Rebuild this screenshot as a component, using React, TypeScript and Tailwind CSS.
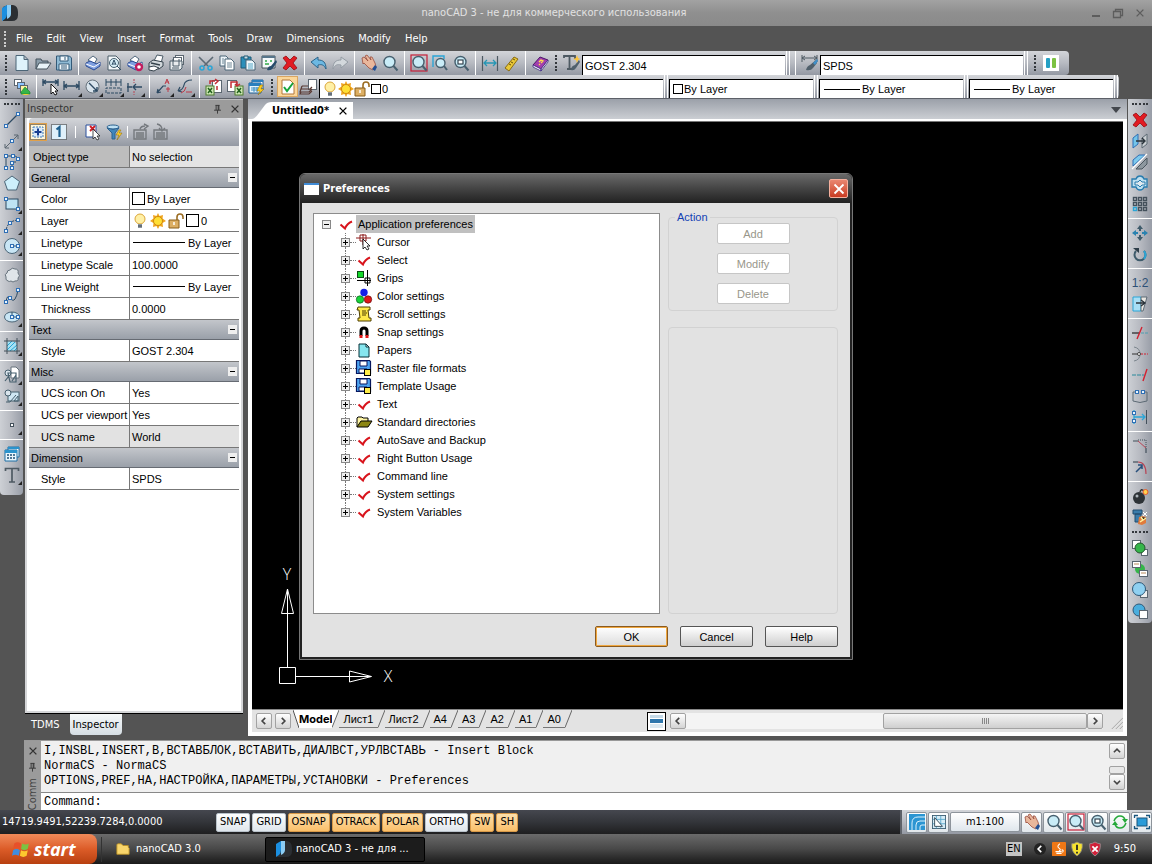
import { Fragment, type ReactNode } from "react";
import clsx from "clsx";

const INK = "#2d4a63";
const BLUE = "#2f6fb5";
const CYAN = "#2aa5d6";

const lens = (
    <>
        <circle cx="7.5" cy="7" r="5.5" fill="#c9ecf7" stroke="#47606f" strokeWidth="1.4" />
        <path d="M11.5 11l4 4.500" stroke="#47606f" strokeWidth="2" />
    </>
);

const hand = (
    <>
        <path d="M1 3l2-1 4 4-3-5 2-1 4 5-1-3 2 0 3 6 1 4-3 3-4-2-5-5-1 1z" fill="#e9b79c" stroke="#9a4d3c" strokeWidth=".8" />
        <path d="M11 14l3-4 2 2-2 4z" fill="#224f93" />
    </>
);

const printer = (
    <>
        <path d="M3 5l5-4 4 3-3 5z" fill="#fff" stroke={INK} strokeWidth=".8" />
        <path d="M1 8l4-2 7 3 3-2v4l-6 4-8-4z" fill="#7f9fe0" stroke="#294a94" strokeWidth="1" />
        <path d="M1 9l8 3 6-4" fill="none" stroke="#fff" strokeWidth="1" />
    </>
);

const node = (x: number, y: number) => (
    <rect x={x - 1.5} y={y - 1.5} width="3" height="3" fill="#eaf6ff" stroke={BLUE} strokeWidth="1" />
);

const sheet = (x: number, y: number, w: number, h: number, fill = "#fff") => (
    <rect x={x + 0.5} y={y + 0.5} width={w} height={h} fill={fill} stroke="#5b6670" strokeWidth="1" />
);

const ICONS: Record<string, ReactNode> = {
    file: <path d="M2 .5h8l4 4v11H2zM10 .5v4h4" fill="#dff3fb" stroke="#4b6577" />,
    open: (
        <>
            <path d="M1 14V4h5l1 2h6v3" fill="#8b9daa" stroke="#43505b" />
            <path d="M1 14l3-6h12l-4 6z" fill="#e8f3f8" stroke="#43505b" />
        </>
    ),
    save: (
        <>
            <path d="M.5 1h13l2 2v12H.5z" fill="#8fbad4" stroke="#345a78" />
            <path d="M4 1h8v5H4zM3 9h10v6H3z" fill="#f4fafd" stroke="#345a78" />
            <path d="M5 11h6M5 13h6M9 2v3" stroke="#345a78" />
        </>
    ),
    print: printer,
    preview: (
        <>
            <path d="M2 1h8l4 4v10H2z" fill="#f4f8fa" stroke="#4b5c68" />
            <circle cx="8" cy="8" r="4.5" fill="#d6edf6" stroke="#47606f" />
            <path d="M6 10l2-5 2 5M7 9h2M11 11l4 4" stroke={INK} fill="none" />
        </>
    ),
    printSetup: (
        <>
            {printer}
            <circle cx="12" cy="12" r="3" fill="#fff" stroke="#c21d5e" strokeWidth="2.4" />
        </>
    ),
    plot: (
        <>
            <path d="M6 6l3-6 6 1-2 7z" fill="#fff" stroke="#4b5c68" />
            <path d="M1 8l4-3 10 2v4l-4 3-10-2z" fill="#d2d8dc" stroke="#35424c" />
            <path d="M1 12l5-1 5 2-5 3-5-1z" fill="#fff" stroke="#35424c" />
            <path d="M3 8l9 2" stroke="#35424c" strokeWidth="1.4" />
        </>
    ),
    batch: (
        <>
            {sheet(6, 0, 8, 9)}
            {sheet(4, 2, 8, 9)}
            <path d="M1 6h12v7l-2 2H1z" fill="#e8ecee" stroke="#4b5c68" />
            <path d="M4 4v7h6V4M3 13h7" stroke="#4b5c68" fill="none" />
        </>
    ),
    cut: (
        <>
            <path d="M1 2l9 9M15 2l-9 9" stroke="#5d6a75" strokeWidth="1.6" />
            <circle cx="4" cy="13" r="2" fill="none" stroke={CYAN} strokeWidth="1.5" />
            <circle cx="12" cy="13" r="2" fill="none" stroke={CYAN} strokeWidth="1.5" />
        </>
    ),
    copy: (
        <>
            <path d="M1 1h6l2 2v8H1z" fill="#eef5f9" stroke="#4b6577" />
            <path d="M6 4h6l3 3v8H6z" fill="#fff" stroke="#4b6577" />
            <path d="M8 8h5M8 10h5M8 12h5M3 4h2M3 6h2M3 8h2" stroke="#6f8796" />
        </>
    ),
    paste: (
        <>
            <path d="M1 2h10v11H1z" fill="#2b8fba" stroke="#1f5a77" />
            <path d="M4 1h4v3H4z" fill="#c9dbe4" stroke="#1f5a77" />
            <path d="M6 5h6l3 3v7H6z" fill="#eef8fc" stroke="#4b6577" />
            <path d="M8 9h5M8 11h5M8 13h5" stroke="#57a6c6" />
        </>
    ),
    match: (
        <>
            <path d="M1 1h13v12H1z" fill="#f5f9fb" stroke="#43505b" />
            <path d="M1 1h13v2H1z" fill="#58768b" />
            <path d="M4 6h2M9 6h2M4 9h4" stroke="#30a84b" strokeWidth="1.4" />
            <path d="M6 15q1-4 4-4l5-6 1 2-4 6q-2 3-6 2z" fill="#274c6b" />
        </>
    ),
    erase: <path d="M1 3l3-2 4 4 4-4 3 2-4 5 4 5-3 2-4-4-4 4-3-2 4-5z" fill="#e21b22" stroke="#960b10" strokeWidth=".8" />,
    undo: <path d="M0 7l7-5v3c5 0 8 2 8 9-2-4-4-5-8-4v3z" fill="#6cb8e2" stroke="#2c6388" />,
    redo: <path d="M16 7L9 2v3c-5 0-8 2-8 9 2-4 4-5 8-4v3z" fill="#d3d8dc" stroke="#949ca4" />,
    pan: hand,
    zoom: lens,
    zoomWindow: (
        <>
            <rect x="0" y="0" width="16" height="16" fill="none" stroke="#c61f37" strokeWidth="1.2" />
            {lens}
        </>
    ),
    zoomPart: (
        <>
            <path d="M1 12V1h11v3" fill="none" stroke={CYAN} strokeWidth="1.4" />
            <circle cx="8.5" cy="8" r="4.5" fill="#c9ecf7" stroke="#47606f" strokeWidth="1.4" />
            <path d="M12 11l3 4" stroke="#47606f" strokeWidth="2" />
        </>
    ),
    zoomAll: (
        <>
            {lens}
            <rect x="5" y="5" width="5" height="4" fill="#fff" stroke="#33434f" strokeWidth="1.2" />
        </>
    ),
    distance: (
        <>
            <path d="M.5 1v15M15.5 1v15" stroke="#4e5a63" strokeWidth="1.2" />
            <path d="M2 8h12M5 5L2 8l3 3M11 5l3 3-3 3" fill="none" stroke="#2596b5" strokeWidth="1.3" />
        </>
    ),
    ruler: (
        <>
            <path d="M2 13L11 2l4 2-9 12z" fill="#e9c838" stroke="#8a6c12" />
            <path d="M6 9l2 1M8 7l2 1M10 4l2 1" stroke="#6b520a" />
        </>
    ),
    book: (
        <>
            <path d="M1 10L8 2l8 3-7 9z" fill="#a33fae" stroke="#4c1668" />
            <path d="M1 10v2l8 4v-2zM9 16l7-9V5l-7 9z" fill="#fff" stroke="#3f2a86" strokeWidth=".8" />
            <path d="M7 7l2-2 2 1-2 2M7 9l1 1" stroke="#ffe14a" fill="none" strokeWidth="1.3" />
        </>
    ),
    textStyle: (
        <>
            <path d="M0 3V1h11v3M5.5 1v13M3 14h5" stroke="#4e5a63" strokeWidth="1.8" fill="none" />
            <path d="M7 15q0-4 4-5l4-5 1 2-4 6q-2 3-5 2z" fill="#50606c" />
            <path d="M13 0l1 3 2 1-2 1-1 3-1-3-3-1 3-1z" fill="#fdc437" />
        </>
    ),
    dimStyle: (
        <>
            <path d="M0 0v7M15 0v7M0 3h15M3 1L0 3l3 2M12 1l3 2-3 2" stroke="#4e5a63" fill="none" />
            <path d="M4 15q1-4 4-5l6-5 1 3-4 5q-2 3-7 2z" fill="#50606c" />
            <path d="M11 8l4-4 1 2-3 4z" fill="#3f8fc9" />
        </>
    ),
    norma: (
        <>
            <rect width="16" height="16" fill="#fff" />
            <rect x="3" y="3" width="4" height="10" rx="1" fill="#25a0c4" />
            <rect x="9" y="3" width="4" height="10" rx="1" fill="#7cc242" />
        </>
    ),
    layerTree: (
        <>
            {sheet(0, 0, 7, 6)}
            {sheet(3, 3, 7, 6, "#8cc4ff")}
            {sheet(6, 6, 7, 7, "#fff4a0")}
            <path d="M7 13l4-5 5 5v2H7z" fill="#34b548" stroke="#1b7a2b" strokeWidth=".6" />
            <path d="M8 15h8l-3 1h-3z" fill="#f2d22c" />
        </>
    ),
    dimSelect: (
        <>
            <path d="M0 0v7M15 0v7M0 3h15M3 1L0 3l3 2M12 1l3 2-3 2" stroke={INK} fill="none" strokeWidth="1.3" />
            <path d="M8 5v10l2-2 2 3 2-1-2-3h3z" fill="#fff" stroke="#000" strokeWidth=".9" />
        </>
    ),
    dimLinear: <path d="M0 2v9M15 2v9M0 7h15M3 5L0 7l3 2M12 5l3 2-3 2" stroke={INK} fill="none" strokeWidth="1.3" />,
    dimRadius: (
        <>
            <circle cx="7.5" cy="7.5" r="6.5" fill="#d9e4ec" stroke="#66727c" />
            <path d="M4 4l8 8M12 8v4H8" stroke={INK} strokeWidth="1.4" fill="none" />
        </>
    ),
    dimChain: (
        <>
            <path d="M0 0v7M5 0v7M10 0v7M15 0v7M0 3h15" stroke={INK} fill="none" />
            <path d="M0 14V9h15v5z" stroke={INK} fill="none" strokeDasharray="3 1" />
        </>
    ),
    dimCenter: (
        <>
            <path d="M0 8h5M15 8H6M9 5L6 8l3 3M1 4v9" stroke={INK} fill="none" strokeWidth="1.3" />
            <path d="M7 0v4M7 12v4" stroke="#b84455" strokeDasharray="2 1" />
        </>
    ),
    tolerance: (
        <>
            <path d="M1 14l6-7h3M1 14l4-1M1 14l1-4" stroke={INK} fill="none" strokeWidth="1.2" />
            <path d="M9 5l2-5 2 5M10 3h3M12 8v5M10 10h4" stroke="#bd3b48" fill="none" />
        </>
    ),
    leader: (
        <>
            <path d="M1 12q5-1 6-6t8-5M1 12l4 1M1 12l2-4" stroke={INK} fill="none" strokeWidth="1.2" />
            <path d="M4 14q4-1 5-6M9 13h6" stroke="#bd3b48" fill="none" />
        </>
    ),
    excelIn: (
        <>
            {sheet(6, 1, 9, 12)}
            <rect y="7" width="8" height="9" fill="#cfe8b5" stroke="#4c7a2c" />
            <path d="M2 9l4 5M6 9l-4 5" stroke="#20601c" strokeWidth="1.5" />
            <path d="M4 5V2h5M9 0l3 2-3 3M11 7v4" stroke="#c22d35" strokeWidth="1.5" fill="none" />
        </>
    ),
    excelOut: (
        <>
            {sheet(0, 1, 9, 11)}
            <rect x="8" y="7" width="8" height="9" fill="#cfe8b5" stroke="#4c7a2c" />
            <path d="M10 9l4 5M14 9l-4 5" stroke="#20601c" strokeWidth="1.5" />
            <path d="M4 9V3h6v3M8 5l2 2 3-2" stroke="#c22d35" strokeWidth="1.5" fill="none" />
        </>
    ),
    tableFlash: (
        <>
            <path d="M4 1h11v9H4z" fill="#fff" stroke="#1d5d94" />
            <path d="M1 4h12v10H1z" fill="#e8f5fc" stroke="#1d5d94" />
            <path d="M1 4h12v3H1zM4 1h11v2H4z" fill="#2a7fbd" />
            <path d="M3 9h8M3 11h8M6 8v5M9 8v5" stroke="#3c8fc4" />
            <path d="M12 6l-3 6h3l-2 4 6-6h-3l2-4z" fill="#ffcc1f" stroke="#8b6b00" strokeWidth=".5" />
        </>
    ),
    layerCheck: (
        <>
            <path d="M2 1h8l4 4v10H2z" fill="#fff" stroke="#b2773a" />
            <path d="M4 8l3 4 6-8" stroke="#17a43b" strokeWidth="2" fill="none" />
        </>
    ),
    layerStack: (
        <>
            {sheet(7, 0, 8, 10)}
            <path d="M1 7h6M1 7l-1 3h9l2-2M0 10l-1 3h9l3-3M0 13l-1 2h9l3-3" fill="none" stroke="#5a3a34" strokeWidth="1.2" />
        </>
    ),
    bulb: (
        <>
            <circle cx="8" cy="6" r="5" fill="#fff0a6" stroke="#dba63a" />
            <path d="M6 11h4v4H6z" fill="#8c96a0" />
            <path d="M6 13h4" stroke="#40474d" />
        </>
    ),
    sun: (
        <>
            <path d="M8 0l1.500 3L13 2l-.5 3.500L16 8l-3.500 2 .5 4-3.500-1L8 16l-1.500-3L3 14l.5-4L0 8l3.500-2.500L3 2l3.500 1z" fill="#f1a51e" />
            <circle cx="8" cy="8" r="4.5" fill="#ffdf35" stroke="#cf8a12" />
        </>
    ),
    unlock: (
        <>
            <path d="M9 7V4q0-3 3-3t3 3v2" fill="none" stroke="#9c6d22" strokeWidth="1.6" />
            <path d="M1 7h10v8H1z" fill="#dcae63" stroke="#8a5e1a" />
            <path d="M6 9v3" stroke="#fff" strokeWidth="1.5" />
        </>
    ),
    line: (
        <>
            <path d="M2 14L14 2" stroke={INK} strokeWidth="1.2" />
            {node(2, 14)}
            {node(14, 2)}
        </>
    ),
    ray: (
        <>
            <path d="M1 15L14 2M10 2h4v4M1 11v4h4" stroke="#5b6670" fill="none" />
            {node(8, 8)}
        </>
    ),
    polyline: (
        <>
            <path d="M2 14V2h8q4 0 4 5M8 14V8h4" stroke={INK} fill="none" />
            {node(2, 14)}
            {node(2, 2)}
            {node(9, 2)}
            {node(14, 5)}
            {node(8, 14)}
            {node(8, 9)}
        </>
    ),
    polygon: <path d="M8 1l7.500 5.500-3 8.500h-9l-3-8.500z" fill="#cdeffb" stroke="#4b6577" />,
    rectangle: (
        <>
            <rect x="2" y="3" width="12" height="10" fill="#bfe3f4" stroke={INK} />
            {node(2, 3)}
            {node(14, 13)}
        </>
    ),
    arc: (
        <>
            <path d="M2 14Q3 4 14 3" stroke={INK} fill="none" strokeDasharray="4 1" />
            {node(2, 14)}
            {node(6, 6)}
            {node(14, 3)}
        </>
    ),
    circle: (
        <>
            <circle cx="8" cy="8" r="7.5" fill="#c9e6f5" stroke="#4b6577" />
            <path d="M8 8h6" stroke={INK} />
            {node(8, 8)}
            {node(14, 8)}
        </>
    ),
    cloud: <path d="M4 14q-3-1-2-4-2-3 1-4 0-3 3-3 2-3 5-1 4 0 3 4 3 3 0 5 1 3-3 3-2 2-4 0-2 1-3 0z" fill="#dfe5e9" stroke="#66727c" />,
    spline: (
        <>
            <path d="M2 14Q3 6 6 10t5 1 3-9" stroke={INK} fill="none" />
            {node(2, 14)}
            {node(6, 10)}
            {node(14, 2)}
        </>
    ),
    ellipse: (
        <>
            <ellipse cx="8" cy="8" rx="7.5" ry="5" fill="#c9e6f5" stroke="#4b6577" />
            <path d="M8 3v5h6" stroke={INK} fill="none" />
            {node(8, 8)}
            {node(14, 8)}
        </>
    ),
    hatch: (
        <>
            <path d="M3 3h6q4 2 4 5v5H3z" fill="#a7e2f4" />
            <path d="M3 8l5-5M3 12l8-8M6 13l7-6M10 13l3-3" stroke={CYAN} />
            <path d="M3 0v16M0 3h16M13 0v16M0 13h16" stroke="#43505b" />
        </>
    ),
    block: (
        <>
            <path d="M7 0h5l3 3v8H7z" fill="#fff" stroke="#66727c" />
            <circle cx="4" cy="6" r="3" fill="#d9e4ec" stroke="#47606f" />
            <path d="M4 6h8v9H6zM1 14l4-5M8 14l4-6" fill="none" stroke="#47606f" strokeWidth="1.2" />
        </>
    ),
    insert: (
        <>
            <rect x="4" y="4" width="11" height="9" fill="#cfe7f3" stroke="#47606f" />
            <circle cx="4" cy="5" r="3" fill="#d9e4ec" stroke="#47606f" />
            <path d="M2 14h4l6-7M10 13l4-5v5z" fill="none" stroke="#47606f" />
        </>
    ),
    point: <rect x="6.5" y="6.5" width="3" height="3" fill="#fff" stroke="#43505b" />,
    table: (
        <>
            <path d="M4 1h11v10H4z" fill="#fff" stroke="#1d6fa5" />
            <path d="M1 4h12v11H1z" fill="#eaf6fc" stroke="#1d6fa5" />
            <path d="M1 4h12v3H1zM4 1h11v2H4z" fill="#2a93cd" />
            <path d="M3 9h2M6 9h2M9 9h2M3 12h2M6 12h2M9 12h2" stroke="#1d4f75" strokeWidth="1.5" />
        </>
    ),
    text: <path d="M1.500 4V1.500h13V4M8 1.500V15M5 15h6" fill="none" stroke="#4e5a63" strokeWidth="1.7" />,
    mirrorCopy: (
        <>
            <path d="M1 5l5-4v10l-5 4z" fill="#74c5ea" stroke={BLUE} />
            <path d="M10 5l5-4v10l-5 4z" fill="#c9ced2" stroke="#5d6a75" />
            <path d="M4 8h8M10 5l3 3-3 3" stroke="#2a333b" strokeWidth="1.4" fill="none" />
        </>
    ),
    mirror: (
        <>
            <path d="M1 12V6l6-5h6z" fill="#7ec9ec" stroke={BLUE} />
            <path d="M4 15L15 4v6l-5 5z" fill="#8d979f" stroke="#4a565f" />
            <path d="M0 15L15 0" stroke="#fff" strokeWidth="1.2" />
        </>
    ),
    offset: (
        <>
            <path d="M0 4h4q1-3 4-3t4 3h3v8h-3q-1 3-4 3t-4-3H0z" fill="#bfe0f0" stroke="#287cae" strokeWidth="1.3" />
            <path d="M3 7h3l2-2 2 2h3v3h-3l-2 2-2-2H3z" fill="#dfe9ef" stroke="#287cae" />
        </>
    ),
    array: (
        <>
            {[1, 6, 11].map((y) =>
                [1, 6, 11].map((x) => (
                    <rect key={`${x}-${y}`} x={x + 0.5} y={y + 0.5} width="3" height="3" fill="none" stroke={x === 1 && y === 11 ? CYAN : "#43505b"} strokeWidth="1.4" />
                ))
            )}
        </>
    ),
    move: (
        <>
            <path d="M8 0l3 4H9v2H7V4H5zM8 16l3-4H9v-2H7v2H5z" fill="#3e5b6b" />
            <path d="M0 8l4-3v2h2v2H4v2zM16 8l-4-3v2h-2v2h2v2z" fill="#2a83b0" />
        </>
    ),
    rotate: (
        <>
            <path d="M4 5a5.500 5.500 0 1 0 8 0" fill="none" stroke="#3e5b6b" strokeWidth="2" />
            <path d="M12 5q3 4 0 8" fill="none" stroke={CYAN} strokeWidth="2" />
            <path d="M1 2h6v5z" fill="#2e3e49" />
        </>
    ),
    stretch: (
        <>
            <path d="M1 1h8v14H1z" fill="#a8def5" stroke={CYAN} />
            <path d="M9 1h6l-4 14H9z" fill="#e8e6e1" stroke="#5d6a75" />
            <path d="M4 7h8M9 4l4 3-4 3" stroke="#2a333b" strokeWidth="1.3" fill="none" />
        </>
    ),
    trim: (
        <>
            <path d="M0 8h7" stroke="#222" strokeWidth="1.2" />
            <path d="M9 8h7" stroke="#4d9db0" strokeDasharray="3 1" />
            <path d="M5 14L10 2" stroke="#d32030" strokeWidth="1.4" />
        </>
    ),
    breakAt: (
        <>
            <path d="M2 1q6 1 6 7t-6 7" fill="none" stroke="#7b858d" />
            <path d="M0 8h8" stroke="#333" />
            <path d="M9 8h7" stroke="#d32030" strokeDasharray="2 1" />
            <circle cx="7" cy="8" r="1.5" fill="#fff" stroke="#444" />
        </>
    ),
    extend: (
        <>
            <path d="M0 8h12" stroke="#2b8a9c" strokeDasharray="4 1" />
            <path d="M11 14l4-12" stroke="#d32030" strokeWidth="1.4" />
        </>
    ),
    breakLine: (
        <>
            <path d="M4 4H1v9q7 3 14 0V4h-3" fill="none" stroke="#5d6a75" />
            {node(5, 4)}
            {node(11, 4)}
        </>
    ),
    join: (
        <>
            <path d="M2 1v14M2 8h10M10 5l3 3-3 3" fill="none" stroke={CYAN} strokeWidth="1.3" />
            <path d="M14.5 1v14" stroke="#43505b" />
            {node(2, 4)}
            {node(2, 12)}
        </>
    ),
    chamfer: (
        <>
            <path d="M1 3h5M14 10v5" stroke="#43505b" strokeWidth="1.2" />
            <path d="M6 3l8 7" stroke="#b84455" />
            <path d="M6 2h8v8" fill="none" stroke="#43505b" strokeDasharray="1 1" />
        </>
    ),
    fillet: (
        <>
            <path d="M1 3h5" stroke="#43505b" strokeWidth="1.2" />
            <path d="M6 3q8 0 8 12" stroke="#b84455" fill="none" strokeWidth="1.2" />
            <path d="M4 13l6-6M6 6h4v4" stroke="#27507c" strokeWidth="1.5" fill="none" />
        </>
    ),
    explode: (
        <>
            <circle cx="7" cy="10" r="6" fill="#2d3236" />
            <circle cx="5" cy="8" r="1.5" fill="#aeb6bb" />
            <path d="M8 4q1-4 4-1" stroke="#333" fill="none" strokeWidth="1.5" />
            <circle cx="13.5" cy="4" r="2.5" fill="#ffd34d" stroke="#e4572d" />
        </>
    ),
    purge: (
        <>
            <path d="M1 1h9v4H1zM3 5h6v8H3z" fill="#3b7cab" stroke="#234d6e" />
            <path d="M6 15l1-7 3-1 4 1v6l-4 2z" fill="#e07b3c" />
            <path d="M9 8l2 3 3-2M8 13l3-2" stroke="#fff3a0" strokeWidth="1.5" />
            <path d="M11 3l4 4M15 3l-4 4" stroke="#fff" />
        </>
    ),
    orderFront: (
        <>
            {sheet(0, 0, 8, 8)}
            {sheet(9, 9, 6, 6)}
            <circle cx="8" cy="8" r="5" fill="#35b54a" stroke="#24552c" />
        </>
    ),
    orderBack: (
        <>
            <circle cx="8" cy="8" r="5" fill="#35b54a" />
            {sheet(0, 0, 8, 6)}
            {sheet(7, 9, 8, 6)}
            <path d="M2 3h5M9 12h5" stroke="#b98a5a" />
        </>
    ),
    orderAbove: (
        <>
            {sheet(8, 8, 7, 7, "#eee")}
            <circle cx="7" cy="7" r="6.5" fill="#8fd0f1" stroke="#2e5878" />
        </>
    ),
    orderUnder: (
        <>
            <circle cx="7" cy="7" r="6" fill="#4aaede" stroke="#2e5878" />
            {sheet(7, 7, 8, 8)}
        </>
    ),
    gridPlus: (
        <>
            <rect x=".5" y=".5" width="15" height="15" fill="#fff5d8" stroke="#222" strokeDasharray="1 1" />
            <rect x="3" y="3" width="10" height="10" fill="#d8e9fa" stroke="#3d7bb8" strokeDasharray="2 1" />
            <path d="M8 4.500v7M4.500 8h7" stroke="#163d8f" strokeWidth="2" />
        </>
    ),
    one: (
        <>
            <rect x=".5" y=".5" width="15" height="15" fill="#dff0fa" stroke="#222" strokeDasharray="1 1" />
            <path d="M5.500 5.500L8.500 3v10" stroke="#1c5f8e" strokeWidth="2.2" fill="none" />
        </>
    ),
    unselect: (
        <>
            <path d="M2 1h10v12H2z" fill="#fff" stroke="#2b4f9c" />
            <path d="M6 2l5 5M11 2L6 7" stroke="#d01c26" strokeWidth="1.8" />
            <path d="M9 5v10l2-2 2 3 2-1-2-3h3z" fill="#fff" stroke="#222" strokeWidth=".8" />
        </>
    ),
    filter: (
        <>
            <ellipse cx="7" cy="3" rx="6" ry="2" fill="#bfe1f4" stroke="#2d6290" />
            <path d="M1 4l5 5v6h3V9l4-5q-6 3-12 0z" fill="#3f86bd" stroke="#2d6290" />
            <path d="M13 6l-3 5h3l-2 5 5-7h-3l2-3z" fill="#ffd02c" stroke="#8b6b00" strokeWidth=".5" />
        </>
    ),
    listOut: <path d="M1 6h12v9H1zM3 9h8M3 11h8M3 13h8M7 5q1-3 5-3M11 0l4 2-4 3" fill="none" stroke="#75797e" strokeWidth="1.4" />,
    listIn: <path d="M1 6h13v9H1zM3 9h9M3 11h9M3 13h9M4 0q5 1 5 6M6 4l3 3 3-3" fill="none" stroke="#75797e" strokeWidth="1.4" />,
    check: <path d="M2.500 8.500L7 12.500q2-5 7-7" fill="none" stroke="#d8141c" strokeWidth="2" />,
    prefCursor: (
        <>
            <path d="M0 4h15M7 0v11M4 1h6v6H4z" fill="none" stroke="#8c1a1a" />
            <path d="M7 5v10l2-2 2 3 2-1-2-3h3z" fill="#fff" stroke="#000" strokeWidth=".8" />
        </>
    ),
    prefGrips: (
        <>
            <rect x="1.5" y="1.5" width="6" height="6" fill="#14d82a" stroke="#0a4d12" />
            <path d="M1 10.500h14M11.500 0v16M9 8h5v5H9z" fill="none" stroke="#000" />
        </>
    ),
    prefColors: (
        <>
            <circle cx="8" cy="4.5" r="3.7" fill="#1420e8" />
            <circle cx="4" cy="11.5" r="3.7" fill="#18d53a" stroke="#0a5c18" strokeWidth=".7" />
            <circle cx="12" cy="11.5" r="3.7" fill="#e01818" stroke="#650a0a" strokeWidth=".7" />
        </>
    ),
    prefScroll: (
        <>
            <path d="M2 1h12v3h-2l1 8h2v3H2v-3h2L3 4H1z" fill="#ffe94a" stroke="#4d3d00" />
            <path d="M6 5h4M6 7h5M6 9h4" stroke="#4d3d00" />
        </>
    ),
    prefSnap: (
        <>
            <path d="M5 12V7q0-3 3-3t3 3v5" fill="none" stroke="#000" strokeWidth="3" />
            <path d="M3.500 11h3v3h-3zM9.500 11h3v3h-3z" fill="#e01818" />
        </>
    ),
    prefPaper: <path d="M3 2h7l3 3v10H3zM10 2v3h3" fill="#86e6ef" stroke="#073038" />,
    prefDisk: (
        <>
            <path d="M.5 .5h13l1 1v12H.5z" fill="#4da3f0" stroke="#06165e" strokeWidth="1.2" />
            <path d="M4 1h7v5H4zM3 9h8v4H3z" fill="#fff" stroke="#06165e" />
            <rect x="8.5" y="9.5" width="6" height="6" fill="#ffed4a" stroke="#000" />
        </>
    ),
    prefFolder: (
        <>
            <path d="M1 13V4l1-1h4l1 1h5v4" fill="#fff6a5" stroke="#000" />
            <path d="M1 13l4-6h11l-4 6z" fill="#8c8614" stroke="#000" />
        </>
    ),
    app: (
        <>
            <path d="M1 16V2l5-2h5q5 1 5 7v3q0 6-6 6z" fill="#2b2f33" />
            <path d="M0 16V3l5-3v9q0 3-2 5z" fill="#1b8fe0" />
            <path d="M5 0h4v9q0 3-4 5z" fill="#8ccdf5" />
        </>
    ),
    isolines: (
        <>
            <rect width="16" height="16" fill="#2c95d2" />
            <path d="M3 16V9q0-6 6-6h7M7 16v-5q0-4 4-4h5M11 16v-3q0-2 2-2h3" fill="none" stroke="#d8f0fc" />
        </>
    ),
    modelGrid: (
        <>
            <rect x=".5" y=".5" width="15" height="15" fill="#d8edf7" stroke="#3a5b70" />
            <path d="M5 1v14M10 1v14M1 5h14M1 10h14" stroke="#56a6cc" />
            <path d="M3 3l9 10H3z" fill="#fff" stroke="#2a3f4e" />
        </>
    ),
    refresh: (
        <>
            <path d="M2 7q2-5 6-5 4 0 5 4M14 9q-2 5-6 5-4 0-5-4" fill="none" stroke="#25a83a" strokeWidth="1.6" />
            <path d="M10 5h6l-3 4zM0 11h6l-3-4z" fill="#25a83a" />
        </>
    ),
    fullscreen: (
        <>
            <rect x="3" y="4" width="10" height="8" fill="#2a9bd8" stroke="#16547d" />
            <path d="M.5 4V1.500H4M12 1.500h3.500V4M15.500 12v2.500H12M4 14.500H.5V12" fill="none" stroke="#16547d" strokeWidth="1.3" />
        </>
    ),
    folder: <path d="M1 14V3l1-1h4l2 2h6v2l1 1v7z" fill="#f8d56b" stroke="#b98f23" />,
    windows: (
        <>
            <path d="M2 3q3-2 6 0L7 8q-3-2-6 0z" fill="#e8502a" />
            <path d="M9 3q3 2 6 0l-1 5q-3 2-6 0z" fill="#7cc242" />
            <path d="M1 9q3-2 6 0l-1 5q-3-2-6 0z" fill="#3f8de0" />
            <path d="M8 9q3 2 6 0l-1 5q-3 2-6 0z" fill="#fdc92e" />
        </>
    ),
    java: (
        <>
            <rect width="16" height="16" rx="1" fill="#ee7716" />
            <path d="M9 2q-4 3-1 5t0 3M4 11h7M5 13h6M11 9q3 0 1 3" fill="none" stroke="#fff" strokeWidth="1.2" />
        </>
    ),
    shieldWarn: (
        <>
            <path d="M8 0q3 2 6 2 1 9-6 14Q1 11 2 2q3 0 6-2z" fill="#f7e330" stroke="#8f8c7a" />
            <path d="M8 3v6M8 11v2" stroke="#222" strokeWidth="2" />
        </>
    ),
    shieldStop: (
        <>
            <path d="M8 0q3 2 6 2 1 9-6 14Q1 11 2 2q3 0 6-2z" fill="#d21f38" stroke="#9d8c8f" />
            <path d="M5 5l6 6M11 5l-6 6" stroke="#fff" strokeWidth="2" />
        </>
    ),
    close: <path d="M3.500 3.500l9 9M12.500 3.500l-9 9" stroke="currentColor" strokeWidth="1.8" />,
    pin: <path d="M5 2h6M6 2v7M10 2v7M9 2v7M3 9h10M8 9v5" stroke="currentColor" strokeWidth="1.3" fill="none" />,
    left: <path d="M10 3L5 8l5 5" stroke="currentColor" strokeWidth="2.6" fill="none" />,
    right: <path d="M6 3l5 5-5 5" stroke="currentColor" strokeWidth="2.6" fill="none" />,
    up: <path d="M3 10l5-5 5 5" stroke="currentColor" strokeWidth="2.6" fill="none" />,
    down: <path d="M3 6l5 5 5-5" stroke="currentColor" strokeWidth="2.6" fill="none" />,
};

function Icon({ name, className = "size-4" }: { name: string; className?: string }) {
    return (
        <svg viewBox="0 0 16 16" className={clsx("shrink-0 overflow-visible", className)} aria-hidden="true">
            {ICONS[name]}
        </svg>
    );
}

// [icon, label, has flyout]; "|" is a separator, ":" a new grip
type Tool = [string, string, boolean?] | "|" | ":";

function Tools({ items, vertical }: { items: Tool[]; vertical?: boolean }) {
    return (
        <>
            {items.map((item, i) => {
                if (item === "|") {
                    return (
                        <div key={i} className={clsx("flex shrink-0 items-center justify-center", vertical ? "h-2 w-full" : "h-full w-2")}>
                            <div className={clsx("bg-white", vertical ? "h-px w-full" : "h-full w-px")} />
                        </div>
                    );
                }
                if (item === ":") return <Grip key={i} vertical={vertical} />;
                const [icon, label, more] = item;
                return (
                    <button key={i} type="button" aria-label={label} className={clsx("relative flex size-[21px] shrink-0 items-center justify-center", icon === "layerCheck" && "border border-[#d9a662] bg-[#fbd79a]")}>
                        {icon === "scale" ? <span className="font-['Liberation_Sans',sans-serif] text-xs text-[#2d5076]">1:2</span> : <Icon name={icon} />}
                        {more && (
                            <svg viewBox="0 0 4 4" className="absolute right-0 bottom-0 size-1" aria-hidden="true">
                                <path d="M4 0v4H0z" fill="#222" />
                            </svg>
                        )}
                    </button>
                );
            })}
        </>
    );
}

function Grip({ vertical }: { vertical?: boolean }) {
    return (
        <div className={clsx("flex shrink-0 items-center justify-center", vertical ? "h-2.5 w-full" : "h-full w-[11px]")}>
            <div className={clsx("border-dotted border-[#33373c]", vertical ? "w-4 border-t-2" : "h-4 border-l-2")} />
        </div>
    );
}

const STANDARD: Tool[] = [
    ["file", "New"], ["open", "Open"], ["save", "Save"], "|",
    ["print", "Print"], ["preview", "Print preview"], ["printSetup", "Print setup"], ["plot", "Plot"], ["batch", "Batch plot"], "|",
    ["cut", "Cut"], ["copy", "Copy"], ["paste", "Paste"], ["match", "Match properties"], ["erase", "Erase"], "|",
    ["undo", "Undo"], ["redo", "Redo"], "|",
    ["pan", "Pan"], ["zoom", "Zoom"], "|",
    ["zoomWindow", "Zoom window"], ["zoomPart", "Zoom previous"], ["zoomAll", "Zoom all"], "|",
    ["distance", "Distance"], ["ruler", "Measure"], "|",
    ["book", "Help contents"], ":",
    ["textStyle", "Text style"],
];

const DIMENSION: Tool[] = [
    ["layerTree", "Layers"], "|",
    ["dimSelect", "Select dimension"], ["dimLinear", "Linear", true], ["dimRadius", "Radius", true], ["dimChain", "Chain", true], ["dimCenter", "Center", true], "|",
    ["tolerance", "Tolerance", true], ["leader", "Leader", true], "|",
    ["excelIn", "Import table"], ["excelOut", "Export table"], ["tableFlash", "Table"], ":",
    ["layerCheck", "Current layer"], ["layerStack", "Layer list"],
];

const DRAW: Tool[] = [
    ["line", "Line"], ["ray", "Ray", true], ["polyline", "Polyline"], ["polygon", "Polygon"], ["rectangle", "Rectangle", true], ["arc", "Arc", true], ["circle", "Circle", true], "|",
    ["cloud", "Revision cloud"], ["spline", "Spline"], ["ellipse", "Ellipse", true], "|",
    ["hatch", "Hatch", true], "|",
    ["block", "Make block", true], ["insert", "Insert block", true], "|",
    ["point", "Point", true], "|",
    ["table", "Table"], ["text", "Text", true],
];

const MODIFY: Tool[] = [
    ["erase", "Delete"], ["mirrorCopy", "Copy objects"], ["mirror", "Mirror"], ["offset", "Offset"], ["array", "Array"], "|",
    ["move", "Move"], ["rotate", "Rotate"], "|",
    ["scale", "Scale"], ["stretch", "Stretch"], "|",
    ["trim", "Trim"], ["breakAt", "Break at point"], ["extend", "Extend"], ["breakLine", "Break"], ["join", "Join"], "|",
    ["chamfer", "Chamfer"], ["fillet", "Fillet"], "|",
    ["explode", "Explode"], ["purge", "Purge"], ":",
    ["orderFront", "Bring to front"], ["orderBack", "Send to back"], ["orderAbove", "Bring above"], ["orderUnder", "Send under"],
];

const MENU = ["File", "Edit", "View", "Insert", "Format", "Tools", "Draw", "Dimensions", "Modify", "Help"];

const BAR = "bg-linear-to-b from-[#d3d5d9] via-[#b7bac1] to-[#9499a3]";
const SIDEBAR = "bg-linear-to-r from-[#cdd0d5] via-[#b7bac1] to-[#989da7]";

function Combo({ label, value, className, children }: { label: string; value: string; className?: string; children?: ReactNode }) {
    return (
        <div className={clsx("mt-1 flex shrink-0 items-center self-stretch border-t border-l border-black bg-white pl-0.5 text-black", className)}>
            {children}
            <select aria-label={label} defaultValue={value} className="min-w-0 flex-1 appearance-none bg-transparent">
                <option>{value}</option>
            </select>
        </div>
    );
}

const BarEnd = () => <div className="mx-px h-full w-1 shrink-0 border-x border-white" />;

function Toolbars() {
    return (
        <div className="flex shrink-0 flex-col items-start overflow-hidden font-['Liberation_Sans',sans-serif]">
            <div className={clsx("flex h-6 items-center rounded-r-sm", BAR)}>
                <Grip />
                <Tools items={STANDARD} />
                <Combo label="Text style" value="GOST 2.304" className="w-[203px]" />
                <BarEnd />
                <Tools items={["|", ["dimStyle", "Dimension style"]]} />
                <Combo label="Dimension style" value="SPDS" className="w-[203px]" />
                <BarEnd />
                <Tools items={[":", ["norma", "NormaCS"]]} />
                <div className="w-2" />
            </div>
            <div className={clsx("flex h-6 items-center rounded-r-sm border-b border-[#5c6068]", BAR)}>
                <Grip />
                <Tools items={DIMENSION} />
                <Combo label="Layer" value="0" className="w-[344px]">
                    <Icon name="bulb" />
                    <Icon name="sun" />
                    <Icon name="unlock" />
                    <span className="mx-px size-[10px] border border-black" />
                </Combo>
                <BarEnd />
                <Combo label="Color" value="By Layer" className="w-36">
                    <span className="mx-px size-[10px] border border-black" />
                </Combo>
                <BarEnd />
                {["Linetype", "Line weight"].map((label) => (
                    <Fragment key={label}>
                        <Combo label={label} value="By Layer" className="w-36">
                            <span className="mx-0.5 h-px w-9 bg-black" />
                        </Combo>
                        <BarEnd />
                    </Fragment>
                ))}
            </div>
        </div>
    );
}

const swatch = <span className="size-[13px] shrink-0 border border-black" />;
const lineSample = <span className="mx-px h-px w-[52px] shrink-0 bg-black" />;

const PROPERTIES: { group: string; rows: [string, string, ReactNode?][] }[] = [
    {
        group: "General",
        rows: [
            ["Color", "By Layer", swatch],
            ["Layer", "0", <Fragment key="l"><Icon name="bulb" /><Icon name="sun" /><Icon name="unlock" />{swatch}</Fragment>],
            ["Linetype", "By Layer", lineSample],
            ["Linetype Scale", "100.0000"],
            ["Line Weight", "By Layer", lineSample],
            ["Thickness", "0.0000"],
        ],
    },
    { group: "Text", rows: [["Style", "GOST 2.304"]] },
    { group: "Misc", rows: [["UCS icon On", "Yes"], ["UCS per viewport", "Yes"], ["UCS name", "World"]] },
    { group: "Dimension", rows: [["Style", "SPDS"]] },
];

function Inspector() {
    return (
        <div className="flex w-[218px] shrink-0 flex-col">
            <section className="flex min-h-0 flex-1 flex-col border-2 border-t-0 border-[#d5d6d8] bg-white">
                <header className="-mx-0.5 flex h-[19px] shrink-0 items-center border-t border-[#bcbcbc] bg-[#9b9b9b] px-0.5 text-[#333]">
                    <h2 className="flex-1">Inspector</h2>
                    <button type="button" aria-label="Pin" className="mr-1.5"><Icon name="pin" className="size-[11px]" /></button>
                    <button type="button" aria-label="Close inspector"><Icon name="close" className="size-3" /></button>
                </header>
                <div className={clsx("mx-0.5 flex h-[28px] shrink-0 items-center gap-1 rounded-t-sm", BAR)}>
                    <button type="button" aria-label="Add to selection" className="border border-[#e0a04a] bg-[#fcd08a]"><Icon name="gridPlus" /></button>
                    <button type="button" aria-label="Select one"><Icon name="one" /></button>
                    <div className="mx-1 h-3 w-px bg-white" />
                    <button type="button" aria-label="Clear selection" className="mr-0.5"><Icon name="unselect" /></button>
                    <button type="button" aria-label="Filter"><Icon name="filter" /></button>
                    <div className="mx-px h-3 w-px bg-white" />
                    <button type="button" aria-label="Export"><Icon name="listOut" /></button>
                    <button type="button" aria-label="Import"><Icon name="listIn" /></button>
                </div>
                <table className="mx-0.5 border-separate border-spacing-0 text-left font-['Liberation_Sans',sans-serif] text-black">
                    <tbody>
                        <tr className="h-[22px]">
                            <th className="w-[101px] border-r border-b border-[#777] bg-[#bdbdbd] px-1 py-0 font-normal">Object type</th>
                            <td className="border-b border-[#777] bg-[#e4e4e4] px-0.5 py-0">No selection</td>
                        </tr>
                    </tbody>
                    {PROPERTIES.map(({ group, rows }) => (
                        <tbody key={group}>
                            <tr className="h-5">
                                <th colSpan={2} className="border-b border-[#666b73] bg-linear-to-b from-[#c3c6cb] to-[#9aa0a9] px-0.5 py-0 font-normal">
                                    <div className="flex items-center justify-between">
                                        {group}
                                        <button type="button" aria-label={`Collapse ${group}`} className="flex size-[9px] items-center justify-center bg-[#eee]">
                                            <span className="h-px w-[5px] bg-black" />
                                        </button>
                                    </div>
                                </th>
                            </tr>
                            {rows.map(([name, value, mark]) => (
                                <tr key={name} className={clsx("h-[22px]", name === "UCS name" && "bg-[#e2e2e2]")}>
                                    <th className="border-r border-b border-[#777] py-0 pr-0 pl-3 font-normal whitespace-nowrap">{name}</th>
                                    <td className="border-b border-[#777] px-0.5 py-0 whitespace-nowrap">
                                        <div className="flex items-center gap-0.5">{mark}{value}</div>
                                    </td>
                                </tr>
                            ))}
                        </tbody>
                    ))}
                </table>
            </section>
            <div className="flex h-[23px] shrink-0 items-start border-t border-black pl-1 text-white">
                <button type="button" className="h-[21px] px-0.5">TDMS</button>
                <button type="button" className="ml-2 h-[21px] rounded-b-sm bg-linear-to-b from-[#f6f9fa] to-[#d5dde3] px-[3px] text-black">Inspector</button>
            </div>
        </div>
    );
}

const SCROLL_BTN = "flex size-4 shrink-0 items-center justify-center rounded-xs border border-[#a2a2a2] bg-linear-to-b from-white to-[#d4d4d4] text-[#444]";
const SHEETS = ["Лист1", "Лист2", "A4", "A3", "A2", "A1", "A0"];

function Drawing() {
    return (
        <section className="flex min-w-0 flex-1 flex-col">
            <div className="flex h-5 shrink-0 items-end bg-linear-to-b from-[#9ba0a9] to-[#cbced3] pl-1">
                <svg viewBox="0 0 20 17" className="h-[17px] w-5" aria-hidden="true">
                    <path d="M0 17Q3 17 7 11L13 3q2-3 7-3v17z" fill="#fff" />
                </svg>
                <div className="flex h-[17px] items-center gap-2 bg-white pr-1 text-black">
                    <span className="font-['DejaVu_Sans_Condensed','DejaVu_Sans',sans-serif] font-bold">Untitled0*</span>
                    <button type="button" aria-label="Close drawing"><Icon name="close" className="size-3" /></button>
                </div>
                <button type="button" aria-label="Drawing list" className="mr-1.5 mb-1.5 ml-auto">
                    <svg viewBox="0 0 10 6" className="h-1.5 w-2.5" aria-hidden="true"><path d="M0 0h10L5 6z" fill="#43474d" /></svg>
                </button>
            </div>
            <div className="flex min-h-0 flex-1 flex-col border-4 border-t-2 border-white">
                <div className="flex min-h-0 flex-1 items-end border-t border-[#777] bg-black pb-3 pl-6">
                    <svg viewBox="0 -10 140 144" className="h-36 w-[140px] font-['Open_Sans',sans-serif] text-base font-light" fill="none" stroke="#fff" aria-hidden="true">
                        <text x="11" y="17" textAnchor="middle" fill="#fff" stroke="none">Y</text>
                        <path d="M11.500 104V26M5.500 50.500h12L11.500 26z" />
                        <path d="M3.500 104.500h16v16h-16zM19.500 113.500h75M73.500 108v11l22-5.500z" />
                        <text x="112" y="119" textAnchor="middle" fill="#fff" stroke="none">X</text>
                    </svg>
                </div>
                <div className="flex h-[23px] shrink-0 items-center border-t border-[#888] bg-[#e3e3e3] pl-1 text-black">
                    <button type="button" aria-label="Previous sheet" className={SCROLL_BTN}><Icon name="left" className="size-2.5" /></button>
                    <button type="button" aria-label="Next sheet" className={clsx("ml-[3px]", SCROLL_BTN)}><Icon name="right" className="size-2.5" /></button>
                    <div className="ml-0.5 flex h-[18px] items-center self-start font-['Liberation_Sans',sans-serif]">
                        <svg viewBox="0 0 6 18" className="h-[18px] w-1.5" aria-hidden="true"><path d="M0 0h6v18z" fill="#fff" /><path d="M0 0l6 18" stroke="#555" /></svg>
                        <button type="button" className="h-[18px] bg-white font-['Inter',sans-serif] font-bold">Model</button>
                        <Slash active />
                        {SHEETS.map((name) => (
                            <Fragment key={name}>
                                <button type="button" className="h-[18px] border-b border-[#777] px-1">{name}</button>
                                <Slash />
                            </Fragment>
                        ))}
                    </div>
                    <button type="button" aria-label="Sheet layout" className="ml-auto flex size-[19px] shrink-0 flex-col gap-px border border-black bg-white p-0.5">
                        <span className="h-1 w-full bg-[#c5dae8]" />
                        <span className="h-1 w-full bg-[#2f77ad]" />
                        <span className="h-1 w-full bg-[#dbe8f0]" />
                    </button>
                    <div className="ml-1 flex w-1/2 items-center bg-[#f4f4f4]">
                        <button type="button" aria-label="Scroll left" className={SCROLL_BTN}><Icon name="left" className="size-2.5" /></button>
                        <div className="flex-1" />
                        <div className="flex h-4 w-[47%] items-center justify-center gap-px rounded-xs border border-[#a2a2a2] bg-linear-to-b from-[#f5f5f5] to-[#cfcfcf]">
                            {[0, 1, 2, 3].map((n) => <span key={n} className="h-1.5 w-px bg-[#888]" />)}
                        </div>
                        <button type="button" aria-label="Scroll right" className={SCROLL_BTN}><Icon name="right" className="size-2.5" /></button>
                    </div>
                    <svg viewBox="0 0 20 20" className="ml-1 size-4 shrink-0" fill="none" stroke="#999" aria-hidden="true">
                        <path d="M6 20L20 6M11 20l9-9M16 20l4-4" />
                    </svg>
                </div>
            </div>
        </section>
    );
}

function Slash({ active }: { active?: boolean }) {
    return (
        <svg viewBox="0 0 7 18" className="h-[18px] w-[7px] shrink-0" aria-hidden="true">
            {active && <path d="M0 0h7L0 18z" fill="#fff" />}
            <path d="M0 17.500L7 0" stroke="#666" />
        </svg>
    );
}

const TREE: [string, string][] = [
    ["prefCursor", "Cursor"],
    ["check", "Select"],
    ["prefGrips", "Grips"],
    ["prefColors", "Color settings"],
    ["prefScroll", "Scroll settings"],
    ["prefSnap", "Snap settings"],
    ["prefPaper", "Papers"],
    ["prefDisk", "Raster file formats"],
    ["prefDisk", "Template Usage"],
    ["check", "Text"],
    ["prefFolder", "Standard directories"],
    ["check", "AutoSave and Backup"],
    ["check", "Right Button Usage"],
    ["check", "Command line"],
    ["check", "System settings"],
    ["check", "System Variables"],
];

function Expander({ open, label }: { open?: boolean; label: string }) {
    return (
        <button type="button" aria-label={label} className="size-[9px] shrink-0 bg-[#eee]">
            <svg viewBox="0 0 9 9" className="size-[9px]" fill="none" aria-hidden="true">
                <rect x=".5" y=".5" width="8" height="8" stroke="#888" />
                <path d={open ? "M2 4.500h5" : "M2 4.500h5M4.500 2v5"} stroke="#000" />
            </svg>
        </button>
    );
}

const DIALOG_BTN = "h-[21px] w-[73px] rounded-xs border";

function PreferencesDialog() {
    return (
        <div role="dialog" aria-labelledby="prefs-title" className="absolute top-[173px] left-1/2 w-[554px] -translate-x-1/2 rounded-t-md border border-[#777] bg-[#222] px-0.5 pb-0.5 font-['Liberation_Sans',sans-serif] text-black">
            <header className="-mx-0.5 flex h-[29px] items-center rounded-t-md bg-linear-to-b from-[#6a6a6a] via-[#444] to-[#222] pr-1 pl-1">
                <svg viewBox="0 0 15 12" className="h-3 w-[15px]" aria-hidden="true"><path d="M0 0h15v12H0z" fill="#fff" /><path d="M0 0h15v2H0z" fill="#3f8bd6" /></svg>
                <h2 id="prefs-title" className="ml-1 flex-1 font-['DejaVu_Sans_Condensed','DejaVu_Sans',sans-serif] font-bold text-white">Preferences</h2>
                <button type="button" aria-label="Close" className="flex size-[19px] items-center justify-center rounded-xs border border-[#f5b09e] bg-linear-to-b from-[#e98670] to-[#c93a20] text-white">
                    <Icon name="close" className="size-4" />
                </button>
            </header>
            <div className="bg-[#e2e2e2] pt-2.5 pr-3 pb-2.5 pl-[11px]">
                <div className="flex h-[401px] gap-2">
                    <ul className="w-[347px] border border-[#8c8c8c] bg-white pt-px pl-2">
                        <li>
                            <div className="flex h-[18px] items-center">
                                <Expander open label="Collapse" />
                                <Icon name="check" className="ml-[7px] size-4" />
                                <span className="ml-0.5 flex h-[18px] items-center bg-[#c0c0c0] px-0.5">Application preferences</span>
                            </div>
                            <ul className="pl-[19px]">
                                {TREE.map(([icon, name], i) => (
                                    <li key={name} className="flex h-[18px] items-center">
                                        <div className="flex h-full flex-col items-center">
                                            <span className="h-[5px] border-l border-dotted border-[#777]" />
                                            <Expander label={`Expand ${name}`} />
                                            <span className={clsx("h-1", i < TREE.length - 1 && "border-l border-dotted border-[#777]")} />
                                        </div>
                                        <span className="w-1.5 border-t border-dotted border-[#777]" />
                                        <Icon name={icon} />
                                        <span className="ml-[5px]">{name}</span>
                                    </li>
                                ))}
                            </ul>
                        </li>
                    </ul>
                    <div className="flex flex-1 flex-col">
                        <fieldset className="-mt-0.5 flex h-[100px] flex-col items-center gap-[9px] rounded-sm border border-[#d2d2d2]">
                            <legend className="ml-1.5 h-3 px-0.5 leading-3 text-[#123fb4]">Action</legend>
                            {["Add", "Modify", "Delete"].map((name) => (
                                <button key={name} type="button" disabled className={clsx(DIALOG_BTN, "shrink-0 border-[#c6c6c6] bg-white text-[#98968a]")}>{name}</button>
                            ))}
                        </fieldset>
                        <div className="mt-4 flex-1 rounded-sm border border-[#d2d2d2]" />
                    </div>
                </div>
                <div className="mt-3 flex justify-end gap-3">
                    <button type="button" className={clsx(DIALOG_BTN, "border-[#8a5a20] bg-linear-to-b from-white to-[#dcdcdc] ring-1 ring-[#f0a840] ring-inset")}>OK</button>
                    <button type="button" className={clsx(DIALOG_BTN, "border-[#555] bg-linear-to-b from-white to-[#cfcfcf]")}>Cancel</button>
                    <button type="button" className={clsx(DIALOG_BTN, "border-[#555] bg-linear-to-b from-white to-[#cfcfcf]")}>Help</button>
                </div>
            </div>
        </div>
    );
}

function CommandLine() {
    return (
        <section className="mt-1 mr-[25px] ml-6 flex h-[70px] shrink-0 border-t border-[#999] bg-[#f0f0f0] text-black">
            <div className="flex w-[17px] shrink-0 flex-col items-center justify-between bg-[#9b9b9b] pt-1 text-[#333]">
                <button type="button" aria-label="Close command line"><Icon name="close" className="size-3" /></button>
                <button type="button" aria-label="Pin command line"><Icon name="pin" className="size-[11px]" /></button>
                <span className="rotate-180 text-[11px] leading-[14px] text-[#444] [writing-mode:vertical-rl]">Comm</span>
            </div>
            <div className="flex min-w-0 flex-1 flex-col font-['Liberation_Mono',monospace] text-xs">
                <div className="flex flex-1 justify-between border-b border-[#888]">
                    <div className="overflow-hidden pt-[3px] pl-[3px] leading-[15px] whitespace-nowrap">
                        <p>I,INSBL,INSERT,B,ВСТАВБЛОК,ВСТАВИТЬ,ДИАЛВСТ,УРЛВСТАВЬ - Insert Block</p>
                        <p>NormaCS - NormaCS</p>
                        <p>OPTIONS,PREF,НА,НАСТРОЙКА,ПАРАМЕТРЫ,УСТАНОВКИ - Preferences</p>
                    </div>
                    <div className="flex w-[18px] flex-col items-start py-0.5">
                        <button type="button" aria-label="Scroll up" className={SCROLL_BTN}><Icon name="up" className="size-2.5" /></button>
                        <div className="mt-auto h-2 w-4 rounded-xs border border-[#a2a2a2] bg-[#e8e8e8]" />
                        <button type="button" aria-label="Scroll down" className={SCROLL_BTN}><Icon name="down" className="size-2.5" /></button>
                    </div>
                </div>
                <label className="flex h-[17px] shrink-0 items-center bg-white pl-[3px]">
                    Command:
                    <input type="text" className="ml-2 min-w-0 flex-1 outline-none" />
                </label>
            </div>
        </section>
    );
}

const MODES: [string, boolean][] = [
    ["SNAP", false], ["GRID", false], ["OSNAP", true], ["OTRACK", true],
    ["POLAR", true], ["ORTHO", false], ["SW", true], ["SH", true],
];

const VIEW_BTN = "flex size-[21px] shrink-0 items-center justify-center rounded-xs border border-[#8d949b] bg-linear-to-b from-white to-[#e1e7eb]";

function StatusBar() {
    return (
        <footer className="flex h-6 shrink-0 items-center bg-linear-to-b from-[#45474f] via-[#33353a] to-[#1f1f20]">
            <span className="w-[216px] shrink-0 pl-0.5">14719.9491,52239.7284,0.0000</span>
            <div className="flex gap-0.5">
                {MODES.map(([name, on]) => (
                    <button
                        key={name}
                        type="button"
                        aria-pressed={on}
                        className={clsx(
                            "h-[19px] rounded-xs border px-[3px] text-black",
                            on ? "border-[#d99a48] bg-linear-to-b from-[#fde0ac] to-[#fabf69]" : "border-[#b9c2ca] bg-linear-to-b from-white to-[#dfe6ec]"
                        )}
                    >
                        {name}
                    </button>
                ))}
            </div>
            <div className={clsx("ml-auto flex h-full shrink-0 items-center gap-px border-l-2 border-[#5e6269] pl-1", BAR)}>
                <button type="button" aria-label="Line weight display" className={VIEW_BTN}><Icon name="isolines" /></button>
                <button type="button" aria-label="Model grid" className={VIEW_BTN}><Icon name="modelGrid" className="size-3.5" /></button>
                <button type="button" className="h-5 w-[70px] rounded-xs border border-[#8d949b] bg-linear-to-b from-white to-[#dfe6ec] text-black">m1:100</button>
                {[["pan", "Pan view"], ["zoom", "Zoom view"], ["zoomWindow", "Zoom to window"], ["zoomAll", "Zoom extents"], ["refresh", "Refresh"], ["fullscreen", "Full screen"]].map(([icon, label]) => (
                    <button key={label} type="button" aria-label={label} className={VIEW_BTN}><Icon name={icon} /></button>
                ))}
            </div>
        </footer>
    );
}

function Taskbar() {
    return (
        <nav aria-label="Taskbar" className="flex h-[30px] shrink-0 items-center bg-linear-to-b from-[#6b6b6b] via-[#484848] to-[#1a1a1a]">
            <button type="button" className="mr-1 flex h-full w-[97px] shrink-0 items-center gap-1 rounded-r-lg bg-linear-to-b from-[#f08a58] via-[#dc5c28] to-[#b8400f] pl-3 font-['Open_Sans',sans-serif] text-lg font-bold text-white italic">
                <Icon name="windows" className="size-[18px]" />
                start
            </button>
            <button type="button" className="flex h-[25px] w-[164px] shrink-0 items-center gap-1.5 border-l border-[#333] pl-3.5">
                <Icon name="folder" className="size-3.5" />
                nanoCAD 3.0
            </button>
            <button type="button" className="flex h-[25px] w-40 shrink-0 items-center gap-1 rounded-xs border border-black bg-[#1c1c1c] pl-2.5">
                <Icon name="app" className="size-4" />
                nanoCAD 3 - не для ...
            </button>
            <div className="ml-auto flex h-full shrink-0 items-center pr-4">
                <button type="button" className="mr-3 bg-[#c4c4c4] px-px text-black">EN</button>
                <button type="button" aria-label="Show hidden icons" className="flex size-3 items-center justify-center rounded-full bg-[#222]"><Icon name="left" className="size-2.5" /></button>
                <div className="ml-1.5 flex items-center gap-1">
                    <Icon name="java" className="size-3.5" />
                    <Icon name="shieldWarn" className="size-3.5" />
                    <Icon name="shieldStop" className="size-3.5" />
                </div>
                <time className="ml-3">9:50</time>
            </div>
        </nav>
    );
}

export default function App() {
    return (
        <div className="relative flex h-screen min-h-[700px] flex-col overflow-hidden bg-[#545454] font-['DejaVu_Sans_Condensed','DejaVu_Sans',sans-serif] text-[11px] leading-[14px] text-white">
            <header className="flex h-[26px] shrink-0 items-center bg-linear-to-b from-[#a2a2a2] via-[#8f8f8f] to-[#8a8a8a] pr-1.5 pl-0.5">
                <Icon name="app" className="size-4" />
                <h1 className="flex-1 text-center text-[#e2e2e2]">nanoCAD 3 - не для коммерческого использования</h1>
                <div className="flex gap-2.5 text-[#5d5d5d]">
                    <button type="button" aria-label="Minimize" className="flex size-3 items-end p-0.5"><span className="h-0.5 w-full bg-current" /></button>
                    <button type="button" aria-label="Restore" className="size-3">
                        <svg viewBox="0 0 12 12" fill="none" stroke="currentColor" strokeWidth="1.3" aria-hidden="true"><path d="M1.500 4.500h7v6h-7zM3.500 4V2.500h7v6H9" /></svg>
                    </button>
                    <button type="button" aria-label="Close window" className="size-3"><Icon name="close" className="size-3" /></button>
                </div>
            </header>
            <nav aria-label="Main menu" className="flex h-[25px] shrink-0 items-center">
                <div className="mr-2 ml-1 h-4 border-l-2 border-dotted border-[#ccc]" />
                {MENU.map((name) => (
                    <button key={name} type="button" className="mr-2.5 px-0.5">{name}</button>
                ))}
            </nav>
            <Toolbars />
            <main className="flex min-h-0 flex-1">
                <div className={clsx("mr-0.5 flex w-[23px] shrink-0 flex-col items-center self-start rounded-b-sm pb-2.5", SIDEBAR)}>
                    <Grip vertical />
                    <Tools items={DRAW} vertical />
                </div>
                <Inspector />
                <div className="w-[5px] shrink-0" />
                <Drawing />
                <div className={clsx("ml-px flex w-6 shrink-0 flex-col items-center self-start rounded-b-sm pb-0.5", SIDEBAR)}>
                    <Grip vertical />
                    <Tools items={MODIFY} vertical />
                </div>
            </main>
            <CommandLine />
            <StatusBar />
            <Taskbar />
            <PreferencesDialog />
        </div>
    );
}
